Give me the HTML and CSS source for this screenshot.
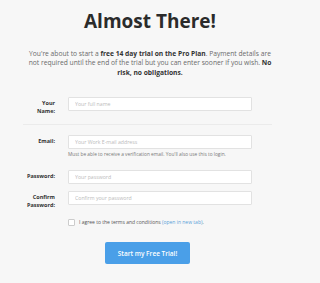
FILE: index.html
```html
<!DOCTYPE html>
<html>
<head>
<meta charset="utf-8">
<link rel="stylesheet" href="styles.css">
</head>
<body>
<div class="page">
  <h1 class="title">Almost There!</h1>
  <p class="intro">You're about to start a <b>free 14 day trial on the Pro Plan</b>. Payment details are not required until the end of the trial but you can enter sooner if you wish. <b>No risk, no obligations.</b></p>
  <form class="form">
    <div class="row">
      <label class="label">Your Name:</label>
      <div class="field"><input class="input" type="text" placeholder="Your full name"></div>
    </div>
    <div class="divider"></div>
    <div class="row">
      <label class="label">Email:</label>
      <div class="field">
        <input class="input" type="text" placeholder="Your Work E-mail address">
        <div class="help">Must be able to receive a verification email. You'll also use this to login.</div>
      </div>
    </div>
    <div class="row row-pw">
      <label class="label">Password:</label>
      <div class="field"><input class="input" type="password" placeholder="Your password"></div>
    </div>
    <div class="row row-confirm">
      <label class="label">Confirm Password:</label>
      <div class="field"><input class="input" type="password" placeholder="Confirm your password"></div>
    </div>
    <div class="agree">
      <span class="box"></span>
      <span class="agree-text">I agree to the terms and conditions <a class="link" href="#">(open in new tab)</a>.</span>
    </div>
    <div class="actions">
      <button class="btn" type="button">Start my Free Trial!</button>
    </div>
  </form>
</div>
</body>
</html>
```
FILE: styles.css
```css
html, body {
  margin: 0;
  padding: 0;
  background: #f7f7f7;
}
body {
  font-family: "Open Sans", "Liberation Sans", sans-serif;
  color: #333;
}
.page {
  width: 300px;
  height: 283px;
  overflow: hidden;
}
.title {
  margin: 0;
  padding-top: 9px;
  font-size: 19px;
  line-height: 24px;
  font-weight: 700;
  text-align: center;
  color: #2b2b2b;
}
.intro {
  width: 246px;
  margin: 16px auto 0;
  font-size: 6.7px;
  line-height: 9.4px;
  text-align: center;
  color: #6a6a6a;
}
.intro b {
  color: #333;
  font-weight: 700;
}
.form {
  width: 249px;
  margin: 20px 0 0 23px;
}
.row {
  display: grid;
  grid-template-columns: 32px 184px;
  column-gap: 13px;
  align-items: start;
}
.label {
  padding-top: 3px;
  font-size: 5.5px;
  line-height: 7.5px;
  font-weight: 700;
  text-align: right;
  color: #333;
}
.input {
  display: block;
  box-sizing: border-box;
  width: 184px;
  height: 14px;
  margin: 0;
  padding: 0 6px;
  border: 1px solid #e2e2e2;
  border-radius: 1px;
  background: #fff;
  font-family: "Open Sans", "Liberation Sans", sans-serif;
  font-size: 5.2px;
  color: #333;
  outline: none;
}
.input::placeholder {
  color: #bbb;
}
.divider {
  height: 1px;
  background: #ebebeb;
  margin: 9px 0 10px;
}
.help {
  margin-top: 2px;
  font-size: 4.8px;
  line-height: 7px;
  color: #777;
}
.row-pw {
  margin-top: 12px;
}
.row-confirm {
  margin-top: 7px;
}
.agree {
  display: flex;
  align-items: center;
  gap: 4px;
  margin: 10px 0 0 45px;
}
.box {
  width: 5px;
  height: 5px;
  border: 1px solid #ccc;
  border-radius: 1px;
  background: #fff;
}
.agree-text {
  font-size: 5px;
  line-height: 7px;
  color: #555;
}
.link {
  color: #5a9fd8;
  text-decoration: none;
}
.actions {
  display: flex;
  justify-content: center;
  margin-top: 16px;
}
.btn {
  width: 85px;
  height: 22px;
  border: 0;
  border-radius: 2px;
  background: #4a9fe8;
  color: #fff;
  font-family: "Open Sans", "Liberation Sans", sans-serif;
  font-size: 6.5px;
  font-weight: 600;
  padding: 0;
}
```
